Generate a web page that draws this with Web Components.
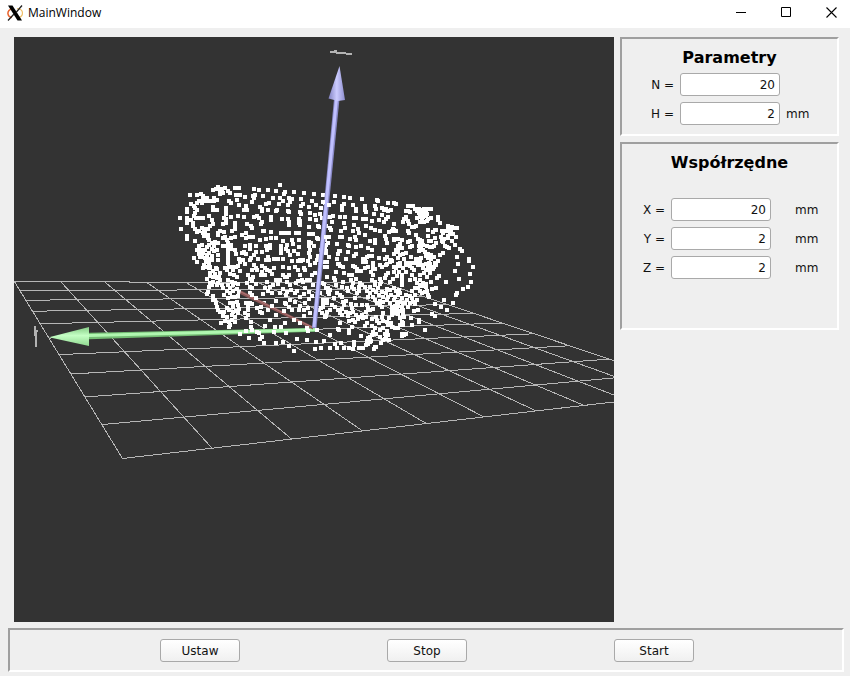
<!DOCTYPE html>
<html lang="pl">
<head>
<meta charset="utf-8">
<title>MainWindow</title>
<style>
html, body { margin: 0; }
body { font: 12px/16px "DejaVu Sans", sans-serif; color: #111; background: #efefef; }
</style>
</head>
<body>
<app-window></app-window>

<template id="t-window">
<style>
:host { display: flex; flex-direction: column; min-height: 100vh; box-sizing: border-box; background: #efefef; }
main { flex: 1; display: grid; grid-template-columns: minmax(0, 1fr) 219px; gap: 6px; padding: 9px 11px 0 14px; }
aside { display: flex; flex-direction: column; gap: 6px; }
footer { padding: 6px 6px 4px 8px; }
.actions { display: flex; justify-content: center; gap: 147px; padding: 9px 0 8px 2px; }
.params { --label: 52px; --unit-gap: 6px; --title-gap: 0px; --foot: 9px; }
.coords { --label: 43px; --unit-gap: 24px; --title-gap: 20px; --foot: 49px; }
</style>
<title-bar>MainWindow</title-bar>
<main>
  <scene-view></scene-view>
  <aside>
    <sunken-panel class="params" heading="Parametry">
      <value-field label="N =" value="20"></value-field>
      <value-field label="H =" value="2" unit="mm"></value-field>
    </sunken-panel>
    <sunken-panel class="coords" heading="Współrzędne">
      <value-field label="X =" value="20" unit="mm"></value-field>
      <value-field label="Y =" value="2" unit="mm"></value-field>
      <value-field label="Z =" value="2" unit="mm"></value-field>
    </sunken-panel>
  </aside>
</main>
<footer>
  <sunken-panel>
    <div class="actions">
      <push-button>Ustaw</push-button>
      <push-button>Stop</push-button>
      <push-button>Start</push-button>
    </div>
  </sunken-panel>
</footer>
</template>

<template id="t-title">
<style>
:host { display: flex; align-items: center; height: 28px; box-sizing: border-box; padding: 0 4px 3px 7px; background: #fff; color: #000; font: 12px/16px "Open Sans", "Noto Sans", sans-serif; }
.name { flex: 1; margin-left: 5px; }
.controls { display: flex; gap: 15px; }
button { width: 30px; height: 24px; padding: 0; border: 0; background: none; display: grid; place-items: center; }
svg { display: block; }
</style>
<svg width="16" height="16" viewBox="0 0 16 16" aria-hidden="true">
  <path d="M6 3.500C2.500 4 .5 6.500 1 9c.3 2 2 3.300 4 3.500" fill="none" stroke="#e8622c" stroke-width="1.500"/>
  <path d="M10 3.500c3 .3 5.500 2 5.500 4.500s-2 4.500-6 4.800" fill="none" stroke="#efc06a" stroke-width="1.200"/>
  <path d="M1 .5h4.500L15 15.500h-4.500z" fill="#000"/>
  <path d="M15 .5L9 7.500M7 9L1 15.500" stroke="#222" stroke-width="1.300"/>
</svg>
<span class="name"><slot></slot></span>
<div class="controls">
  <button aria-label="Minimize"><svg width="11" height="11"><path d="M0 5.500h10" stroke="#000"/></svg></button>
  <button aria-label="Maximize"><svg width="11" height="11"><path d="M.5 .5h9v9h-9z" fill="none" stroke="#000"/></svg></button>
  <button aria-label="Close"><svg width="11" height="11"><path d="M.5 .5l10 10M10.500 .5l-10 10" stroke="#000" stroke-width="1.100"/></svg></button>
</div>
</template>

<template id="t-panel">
<style>
:host { display: block; border: 2px solid; border-color: #9f9f9f #fff #fff #9f9f9f; }
section { padding: 8px 0 var(--foot); display: flex; flex-direction: column; gap: 6px; }
h2 { margin: 0 0 var(--title-gap); padding-top: 2px; font: bold 16px/18px "DejaVu Sans", sans-serif; text-align: center; color: #000; }
</style>
</template>

<template id="t-field">
<style>
:host { display: grid; grid-template-columns: var(--label) 100px 1fr; align-items: center; column-gap: 6px; }
label { text-align: right; white-space: pre; }
input { box-sizing: border-box; width: 100%; height: 23px; margin: 0; padding: 0 4px; border: 1px solid #a9a9a9; border-radius: 3px; background: #fff; color: #111; font: inherit; text-align: right; outline: 0; }
span { margin-left: calc(var(--unit-gap) - 6px); }
</style>
<label for="v"></label><input id="v" type="text" inputmode="numeric"><span></span>
</template>

<template id="t-button">
<style>
:host { display: block; }
button { width: 80px; height: 23px; padding: 0; border: 1px solid #a9a9a9; border-radius: 3px; background: linear-gradient(#fff, #f0f0f0); color: #111; font: inherit; }
</style>
<button type="button"><slot></slot></button>
</template>

<template id="t-scene">
<style>
:host { display: block; position: relative; min-height: 300px; background: #333; overflow: hidden; }
svg { position: absolute; inset: 0; width: 100%; height: 100%; }
</style>
<svg viewBox="14 37 600 585" preserveAspectRatio="xMidYMid slice" role="img" aria-label="3D point cloud">
  <defs>
    <linearGradient id="gb" x1="0" x2="1" y1="0" y2="0"><stop offset="0" stop-color="#8080c0"/><stop offset=".5" stop-color="#ccccff"/><stop offset="1" stop-color="#8d8dce"/></linearGradient>
    <linearGradient id="gg" x1="0" x2="0" y1="0" y2="1"><stop offset="0" stop-color="#85cc85"/><stop offset=".45" stop-color="#c4ffc4"/><stop offset="1" stop-color="#90d890"/></linearGradient>
  </defs>
  <path id="grid" fill="none" stroke="#b6b6b6" shape-rendering="crispEdges"/>
  <path d="M89 332.700L315 328L315 331.700L89 339.300z" fill="#74bd74"/>
  <path d="M89 335.500L315 329.700" stroke="#b0f7b0" stroke-width="3"/>
  <path d="M49 337.300L89 327L89 346z" fill="url(#gg)"/>
  <path id="cloud" fill="#fff" shape-rendering="crispEdges"/>
  <path d="M241 290.500L313 326.500L313 329.500L240 294z" fill="#8c5555"/>
  <path d="M241 292L313 327.500" stroke="#b27878"/>
  <path d="M312 328L334 99L339.500 99L316.500 328z" fill="#8989c6"/>
  <path d="M314 327L336.500 99" stroke="#c0c0ff" stroke-width="3"/>
  <path d="M339.500 66L345 100L338 101L328.500 98.500z" fill="url(#gb)"/>
  <path id="near" fill="#fff" shape-rendering="crispEdges"/>
  <path d="M330 51h4v-1h3v2h9v1h6v2h-6v-1h-10v-1h-6zM34 326h2v4h2v2h-1v15h-2v-11h-1z" fill="#b3b3b3" shape-rendering="crispEdges"/>
</svg>
</template>

<script>
const stamp = (el, id) => {
  const root = el.attachShadow({ mode: "open" });
  root.append(document.getElementById(id).content.cloneNode(true));
  return root;
};

// Cloud points by tile: tile origin, then x,y pairs at three units per pixel.
const TILES = [
[170,170,`329,45 144,50 137,56 165,53 196,54 206,54 251,57 267,60 293,60 318,63 345,66 372,66 402,69 432,72 461,75
130,60 150,62 155,58 60,75 82,75 93,72 98,78 150,72 160,68 175,62 180,70 198,75 210,75 225,81 248,78 254,76 280,78 309,84 330,84 357,84 366,87 394,87 342,72
360,96 338,93 110,84 133,84 108,92 100,90 120,93 133,93 140,90 177,93 183,98 201,90 207,105 228,108 246,96 252,84 270,111 276,117 288,102 297,98 327,102 354,105 393,108 400,102 417,111 426,93 438,105 453,114
64,102 71,108 80,98 86,92 75,115 51,117 51,126 95,99 80,120 75,128 129,111 129,120 140,121 168,114 168,123 168,132 222,120 231,120 276,122 294,120 318,123 322,119 354,123 357,126 390,126 420,129 392,133 435,135 450,132 468,130
30,144 51,144 51,150 51,160 71,138 78,143 87,144 98,144 117,138 162,144 168,146 183,141 204,138 222,141 252,141 261,138 267,143 303,141 303,150 336,147 354,147 387,147 390,153 420,147 438,150 455,144
64,150 68,158 70,168 75,176 80,185 33,177 125,150 128,162 120,168 115,176 95,174 102,178 105,186 88,184 158,162 168,160 195,158 195,168 195,178 231,162 243,168 246,174 273,162 276,156 278,182 282,183 303,186 357,156 357,166 390,165 387,160 417,171 444,168 446,171 468,168
51,198 51,207 75,213 98,190 103,198 115,194 115,205 118,210 144,195 150,184 144,190 162,186 185,183 183,204 195,201 216,195 228,190 228,204 237,201 249,200 270,210 288,207 303,205 318,204 333,188 345,189 357,189 378,189 388,189 417,192 430,192 339,213 366,210 387,210 417,216 422,218 440,204 445,207 465,210
96,225 88,228 81,240 92,240 88,252 98,250 105,240 110,232 118,226 126,218 135,216 144,220 132,228 125,236 132,243 140,240 118,250 125,258 112,256 105,264 115,266 125,270 108,276 117,280 102,285 110,290 116,294 98,295 120,290 95,262 90,262 81,275 72,264 144,255 144,270 138,294 160,204 166,202 170,211 174,220 158,228 165,228 177,230 184,225 174,240 174,250 174,260 174,270 174,280 178,292 196,240 198,253 183,237 165,294 190,294 186,290
225,228 240,225 240,237 258,228 228,252 216,249 222,246 252,256 258,246 276,246 288,228 300,225 300,234 291,240 333,228 333,238 333,249 351,225 369,222 354,243 348,237 372,243 384,252 387,231 420,240 432,228 417,228 417,249 444,258 453,240 468,243 465,228
207,268 219,270 210,275 240,270 243,264 264,267 294,261 296,271 288,270 312,268 324,268 339,267 366,273 360,255 384,273 392,273 390,270 414,273 420,262 440,270 435,279 252,285 258,293 225,282 276,288 285,294 312,294 338,291 357,295 375,290 399,270 402,294 420,285 465,275 450,285 470,290`],
[320,170,`10,75 15,74 45,78 72,81 90,84 126,87 171,90 174,93 204,99 222,99 228,101 15,98 42,96 27,105 72,102 66,108 66,120 99,105 108,118 108,123 135,108 135,120 138,126 165,108 167,117 162,132 186,114 192,120 198,117 204,123 212,120 186,135 204,141 198,148 192,156 177,150 156,153
264,108 270,108 278,108 258,123 264,122 270,126 285,117 291,123 297,116 303,120 312,118 320,117 332,117 296,130 302,132 310,128 318,126 300,140 290,144 308,142 318,138 320,132 306,152 312,156 320,154 332,144 324,146 354,141 354,150 359,160
30,140 39,138 27,141 36,156 60,141 75,141 72,159 75,174 63,183 102,144 108,144 102,165 130,147 138,147 138,168 99,184 114,177 117,189 153,174 165,180 180,183 135,195 60,201 66,201 90,207 30,174 33,181 18,201 27,201
222,162 252,147 258,142 250,156 264,153 267,163 207,186 216,183 222,180 228,184 220,178 264,183 267,189 282,171 288,168 275,172 300,156 324,180 348,180 339,186 345,180 384,168 390,174 396,170 402,174 411,174 384,180 378,184 366,183 370,190 364,200 372,206 366,212 384,198 390,192 398,192 393,186 408,200 396,212 384,205 368,216
104,202 108,210 150,213 165,210 165,219 195,198 198,208 201,219 222,210 234,207 246,210 222,207 270,213 264,216 288,195 294,208 300,210 300,220 308,225 306,213 324,198 327,213 333,213 345,204 348,218
51,222 24,220 18,225 84,225 87,228 108,231 123,228 144,234 156,240 192,240 234,228 240,234 246,234 228,240 234,245 222,252 270,231 276,228 240,222 297,228 303,234 310,240 300,240 314,245 297,243 336,231 342,228 330,230 320,228 360,255 369,249 387,234 374,228 380,232 404,225 420,237 426,243 411,261 414,282 447,267 459,291
15,235 18,250 27,262 60,243 54,252 57,243 51,267 78,267 84,246 102,258 108,252 129,267 140,261 148,258 135,272 138,276 156,258 177,264 158,283 160,294 201,261 195,268 214,270 210,273 201,283 222,290 240,255 248,252 234,264 252,266 258,250 240,278 258,285 273,261 288,267 294,267 303,264 318,258 325,252 333,255 324,264 333,268 327,278 318,282 300,276 306,285 294,285 342,261 354,273 348,285 54,282 57,283 69,291 99,288 105,291 112,296 21,276 15,290 180,285 186,290 228,295 280,280 270,288 276,294 330,290 310,293 340,296`],
[170,260,`120,38 130,32 140,28 120,48 110,57 128,50 135,42 140,55 148,50 150,60 130,65 125,75 118,82 113,95 112,102 120,70 145,68 155,76 150,38 140,75 180,20 172,30 188,30 198,22 205,18 210,32 192,45 200,50 180,42 175,60 185,66 190,75 180,85 190,92 200,86 208,95 180,100 170,92 195,68 205,72 160,85 175,75 162,105 175,115 185,112 195,110 205,108 135,120 138,130 142,140 145,150 150,155 130,108 128,120 180,128 190,130 200,125 205,135 188,140 178,150 188,155 198,152 208,148 170,145 162,155 160,168 172,170 185,165 195,170 205,160 152,188 165,184 178,186 185,180 195,185 177,200 180,196
235,45 240,58 247,62 232,70 240,80 246,85 240,100 258,72 250,52 245,30 262,30 272,45 275,35 285,45 290,30 305,42 300,34 338,45 352,50 345,50 358,45 390,45 384,30 405,30 412,60 425,45 420,60 435,38 395,60 400,65 378,70 385,62 360,75 350,66 330,60 318,60 325,72 310,75 300,80 290,65 284,85 295,92 280,102 305,100 330,100 338,88 350,95 348,105 362,90 375,100 380,92 390,112 405,85 403,103 418,95 416,118 425,108 430,75
234,140 228,130 235,150 246,132 240,128 235,165 228,174 225,160 242,186 262,145 270,155 276,160 273,140 282,130 294,150 318,122 318,165 345,130 348,133 360,120 357,140 366,150 375,125 388,150 390,138 402,150 414,145 405,130 402,168 420,160 315,200 333,201 312,216 300,180 285,198 348,220 345,190 210,222 228,213 243,201 246,210 237,234 260,216 267,220 275,230 282,249 270,237 318,249 339,246 357,258 381,237 372,273 411,240 414,213 435,267 438,246 452,264 462,243
470,50 455,70 468,85 450,100 470,120 460,140 448,150 470,155 465,172 475,95`],
[320,260,`54,12 60,18 69,21 48,35 42,54 45,60 72,39 87,45 97,45 99,17 105,20 111,33 123,33 108,57 69,66 66,80 93,60 96,81 129,5 135,6 159,15 160,9 135,24 145,22 165,27 153,36 160,45 156,60 165,66 180,15 180,57 183,66 198,14 210,6 216,4 204,39 198,45 195,55 210,66 222,36 219,57 231,48 240,18 248,25 237,36 246,45 246,55 246,65 246,75 234,12 258,8 264,8 258,35 270,60 276,10 290,10 283,30 300,9 308,15 276,45 285,58 300,45 312,40 318,30 324,18 330,12 345,10 342,20 328,28 330,40 320,50 333,66 310,68 305,78 318,80 322,92 315,97 325,105 328,110 300,75 295,85 348,84 336,87 318,72 300,60 290,70 285,85 276,92 300,92 306,98 354,3 351,54 357,48 378,66 405,33 414,12 417,57 447,3 450,42 459,21 453,66 444,81 429,87 411,99 408,105 399,129 372,120 363,141 345,132 336,162 345,168 381,150 297,180 297,187 276,195 273,174 315,210
12,72 27,102 24,85 30,90 51,98 48,75 60,105 66,112 42,115 69,126 78,123 82,84 84,93 99,70 103,88 111,99 117,93 105,115 93,132 108,135 126,134 117,81 125,75 135,81 120,69 141,93 150,81 150,100 165,75 159,90 168,96 174,84 180,72 177,105 186,96 189,110 201,87 198,100 210,90 213,105 222,84 228,93 225,110 238,90 235,105 245,115 240,100 160,110 165,120 144,112 141,135 145,145 150,150 138,155 160,147 170,130 180,122 180,136 190,126 185,140 190,158 200,120 210,128 205,112 222,120 230,125 240,125 250,130 215,140 225,138 235,138 245,142 220,150 230,150 240,152 250,150 225,160 235,162 248,162 215,152 252,172 240,175 245,185 215,165 208,175 200,185 212,188 205,195 215,200 225,205 235,205 250,190 248,196 240,195 260,120 270,130 280,125 290,120 275,115 265,140 285,132 282,153 294,150 258,104 270,108 286,105 256,128
9,120 21,129 10,130 36,135 30,150 45,142 54,150 60,160 66,147 72,135 78,156 66,165 84,168 90,160 100,155 96,144 108,165 115,178 120,172 105,185 99,180 88,184 60,189 96,201 87,210 87,218 125,165 130,175 138,170 140,190 135,198 155,178 168,170 172,182 185,172 190,182 178,190 155,198 165,205 160,215 168,222 155,225 150,230 148,240 140,243 153,243 145,235 180,210 190,205 200,212 195,222 180,232 188,240 195,238 207,240 205,225 198,230 184,250 246,222 252,225 258,222 247,228 166,262 162,267 168,260 129,264 144,252 138,255 150,246 123,228 102,246 102,255 117,264 100,267 87,264 72,264 51,264 30,264 3,264 45,252 63,249 30,225 54,207 57,210 12,243 17,168 6,160 4,145`]
];
const NEAR = [
  [320, 170, "8,96 27,105 18,201"],
  [170, 260, "440,210 411,204 390,190 372,180 258,115 306,138 246,106 342,152"]
];

const squares = tiles => tiles.map(([ox, oy, text]) => text.trim().split(/\s+/).map(p => {
  const [x, y] = p.split(",").map(Number);
  return `M${Math.round(ox + x / 3) - 2} ${Math.round(oy + y / 3) - 2}h4v4h-4z`;
}).join("")).join("");

// Floor grid: a unit square projected on four corners
// (back left, back right, front right, front left), ten cells each way.
function floorGrid([x0, y0], [x1, y1], [x2, y2], [x3, y3]) {
  const dx1 = x1 - x2, dx2 = x3 - x2, sx = x0 - x1 + x2 - x3;
  const dy1 = y1 - y2, dy2 = y3 - y2, sy = y0 - y1 + y2 - y3;
  const det = dx1 * dy2 - dx2 * dy1;
  const g = (sx * dy2 - dx2 * sy) / det, h = (dx1 * sy - sx * dy1) / det;
  const at = (u, v) => {
    const w = g * u + h * v + 1;
    return ((x1 - x0 + g * x1) * u + (x3 - x0 + h * x3) * v + x0) / w + " " +
           ((y1 - y0 + g * y1) * u + (y3 - y0 + h * y3) * v + y0) / w;
  };
  let d = "";
  for (let i = 0; i <= 10; i++) {
    const t = i / 10;
    d += `M${at(t, 0)}L${at(t, 1)}M${at(0, t)}L${at(1, t)}`;
  }
  return d;
}

customElements.define("title-bar", class extends HTMLElement {
  constructor() { super(); stamp(this, "t-title"); }
});
customElements.define("push-button", class extends HTMLElement {
  constructor() { super(); stamp(this, "t-button"); }
});
customElements.define("sunken-panel", class extends HTMLElement {
  connectedCallback() {
    if (this.shadowRoot) return;
    const root = stamp(this, "t-panel");
    const slot = document.createElement("slot");
    const heading = this.getAttribute("heading");
    if (!heading) { root.append(slot); return; }
    const section = document.createElement("section");
    const h2 = document.createElement("h2");
    h2.textContent = heading;
    section.append(h2, slot);
    root.append(section);
  }
});
customElements.define("value-field", class extends HTMLElement {
  connectedCallback() {
    if (this.shadowRoot) return;
    const root = stamp(this, "t-field");
    root.querySelector("label").textContent = this.getAttribute("label");
    root.querySelector("input").value = this.getAttribute("value");
    root.querySelector("span").textContent = this.getAttribute("unit") || "";
  }
});
customElements.define("scene-view", class extends HTMLElement {
  constructor() {
    super();
    const root = stamp(this, "t-scene");
    root.getElementById("grid").setAttribute("d", floorGrid([14.5, 281.7], [383, 282.7], [705, 391.5], [122.5, 458.5]));
    root.getElementById("cloud").setAttribute("d", squares(TILES));
    root.getElementById("near").setAttribute("d", squares(NEAR));
  }
});
customElements.define("app-window", class extends HTMLElement {
  constructor() { super(); stamp(this, "t-window"); }
});
</script>
</body>
</html>
